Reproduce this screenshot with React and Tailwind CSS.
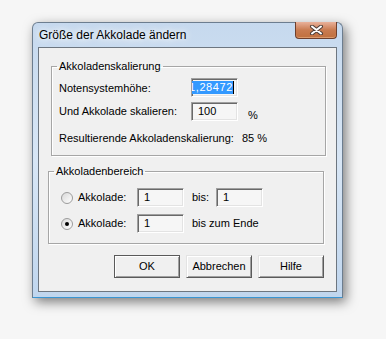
import React from 'react'

function CloseButton() {
    return (
        <div className="-mt-px flex h-[17px] w-[42px] items-center justify-center rounded-b-[4px] border border-t-0 border-[#6e3f2c] bg-gradient-to-b from-[#e9b19a] via-[#c97b50] to-[#c0703e] shadow-[inset_0_-1px_0_#dc9a6c]">
            <svg width="15" height="10" viewBox="0 0 15 10">
                <path d="M3 1.5 L12 8.5 M12 1.5 L3 8.5" stroke="#4e3e38" strokeWidth="4" strokeLinecap="round" />
                <path d="M3 1.5 L12 8.5 M12 1.5 L3 8.5" stroke="#ffffff" strokeWidth="2" strokeLinecap="round" />
            </svg>
        </div>
    )
}

function TextBox({ children, className = '' }) {
    return (
        <div className={`flex h-[19px] w-[47px] items-center overflow-hidden border border-t-[#a0a0a0] border-l-[#a0a0a0] border-b-white border-r-white bg-[#f6f6f6] pl-[6px] shadow-[inset_1px_1px_0_#696969,inset_-1px_-1px_0_#e3e3e3] ${className}`}>
            {children}
        </div>
    )
}

function Radio({ checked }) {
    return (
        <div className="flex h-[12px] w-[12px] items-center justify-center rounded-full border border-[#9c9c9c] bg-gradient-to-br from-[#d8d8d8] to-white">
            {checked && <div className="h-[4px] w-[4px] rounded-full bg-black" />}
        </div>
    )
}

function Button({ children, isDefault }) {
    const edge = isDefault
        ? 'border-[#5a5a5a]'
        : 'border-t-[#e3e3e3] border-l-[#e3e3e3] border-b-[#5a5a5a] border-r-[#5a5a5a]'
    return (
        <button className={`h-[23px] w-[66px] border bg-[#f0f0f0] ${edge} shadow-[inset_1px_1px_0_#fff,inset_-1px_-1px_0_#a0a0a0]`}>
            {children}
        </button>
    )
}

export default function App() {
    return (
        <div className="h-[339px] w-[386px] bg-[#f6f6f6] pl-[32px] pt-[22px] font-['Liberation_Sans',Arial,sans-serif] text-[11px] leading-[13px] text-black">
            <div className="flex h-[276px] w-[311px] flex-col rounded-t-[6px] border border-[#6c7d8f] border-b-[#3a95d2] bg-gradient-to-b from-[#c6d9ee] via-[#d8e6f5] to-[#c0d6ee] shadow-[3px_4px_12px_rgba(0,0,0,0.5)]">
                <div className="flex h-[24px] items-start justify-between pl-[6px] pr-[5px]">
                    <span className="self-center text-[12px] leading-[15px] [text-shadow:0_0_6px_#fff,0_0_10px_#fff]">
                        Größe der Akkolade ändern
                    </span>
                    <CloseButton />
                </div>
                <div className="mx-[5px] mb-[5px] flex-1 border border-[#6d7680] bg-[#f0f0f0]">
                    <fieldset className="ml-[12px] mr-[10px] mt-[12px] border border-[#a6a6a6] pb-[10px] pl-[5px] shadow-[inset_1px_1px_0_#fff,1px_1px_0_#fff]">
                        <legend className="px-[2px]">Akkoladenskalierung</legend>
                        <div className="ml-[2px] mt-[5px] flex flex-col">
                            <div className="flex items-center">
                                <span className="w-[132px] pt-[2px]">Notensystemhöhe:</span>
                                <TextBox className="justify-end pl-0 pr-[3px]">
                                    <span className="shrink-0 whitespace-nowrap bg-[#3399ff] tracking-[0.6px] text-white">1,28472</span>
                                    <span className="h-[13px] w-px shrink-0 bg-black" />
                                </TextBox>
                            </div>
                            <div className="mt-[4px] flex items-center">
                                <span className="w-[132px]">Und Akkolade skalieren:</span>
                                <TextBox>100</TextBox>
                                <span className="ml-[10px] mt-[8px]">%</span>
                            </div>
                            <div className="mt-[10px] flex">
                                <span className="w-[183px]">Resultierende Akkoladenskalierung:</span>
                                <span>85 %</span>
                            </div>
                        </div>
                    </fieldset>
                    <fieldset className="ml-[9px] mr-[12px] mt-[9px] border border-[#a6a6a6] pb-[10px] pl-[5px] shadow-[inset_1px_1px_0_#fff,1px_1px_0_#fff]">
                        <legend className="px-[2px]">Akkoladenbereich</legend>
                        <div className="ml-[7px] mt-[10px] flex flex-col gap-[7px]">
                            <div className="flex items-center">
                                <Radio />
                                <span className="ml-[5px] w-[59px]">Akkolade:</span>
                                <TextBox>1</TextBox>
                                <span className="ml-[8px] w-[24px]">bis:</span>
                                <TextBox>1</TextBox>
                            </div>
                            <div className="flex items-center">
                                <Radio checked />
                                <span className="ml-[5px] w-[59px]">Akkolade:</span>
                                <TextBox>1</TextBox>
                                <span className="ml-[8px]">bis zum Ende</span>
                            </div>
                        </div>
                    </fieldset>
                    <div className="mt-[11px] flex justify-end gap-[6px] pr-[12px]">
                        <Button isDefault>OK</Button>
                        <Button>Abbrechen</Button>
                        <Button>Hilfe</Button>
                    </div>
                </div>
            </div>
        </div>
    )
}
